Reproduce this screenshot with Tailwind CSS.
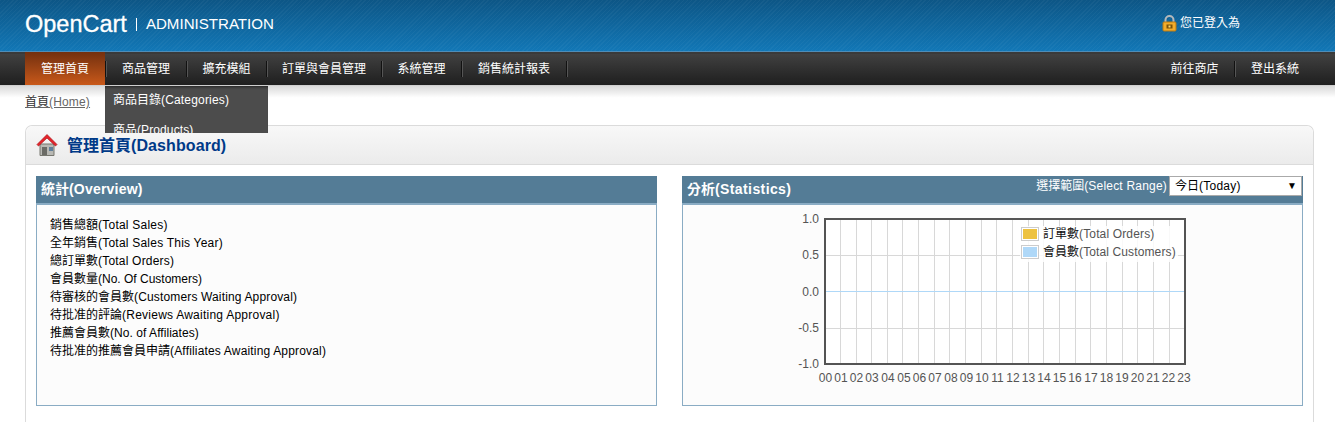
<!DOCTYPE html>
<html lang="zh-Hant">
<head>
    <meta charset="UTF-8">
    <meta name="viewport" content="width=device-width, initial-scale=1.0">
    <script src="https://cdn.jsdelivr.net/npm/@tailwindcss/browser@4"></script>
    <title>管理首頁(Dashboard)</title>
</head>
<body class="relative h-[422px] overflow-hidden bg-white text-[12px] leading-[18px] text-black font-['Liberation_Sans','Noto_Sans_CJK_TC',sans-serif]">

    <!-- header -->
    <header class="h-[52px] flex items-center justify-between pl-[25px] border-b border-[#4f8db8] bg-[image:repeating-linear-gradient(135deg,rgba(255,255,255,0.035)_0,rgba(255,255,255,0.035)_1px,transparent_1px,transparent_3px),linear-gradient(to_bottom,#0d5686,#1277b6)]">
        <div class="flex items-center text-white mb-[3px]">
            <span class="text-[23.5px] leading-[28px] font-['Liberation_Sans'] [-webkit-text-stroke:0.3px_white]">OpenCart</span>
            <span class="ml-[9px] mr-[9px] w-px h-[13px] bg-white"></span>
            <span class="text-[15.1px] leading-[28px]">ADMINISTRATION</span>
        </div>
        <div class="flex items-center text-white w-[173px] mb-[5px]">
            <svg width="15" height="17" viewBox="0 0 15 17" class="mr-[3px]">
                <path d="M3.500 8V5a4 4 0 0 1 8 0v3" fill="none" stroke="#b4b8bb" stroke-width="2"/>
                <rect x="1" y="7" width="13" height="9" rx="1" fill="#f2ac2b" stroke="#b97a12"/>
                <rect x="4.500" y="9.500" width="6" height="4" fill="#7a5208"/>
                <rect x="6.500" y="10.500" width="2" height="2" fill="#ffd86a"/>
            </svg>
            <span>您已登入為</span>
        </div>
    </header>

    <!-- nav -->
    <nav class="h-[34px] flex justify-between pl-[25px] pr-[20px] text-white border-t-2 border-b border-t-[#3a3a3a] border-b-[#cfcfcf] bg-gradient-to-b from-[#414141] to-[#1f1f1f]">
        <ul class="flex items-center h-[30px]">
            <li class="w-[80px] h-[33px] -mt-[2px] self-start flex items-center justify-center bg-gradient-to-b from-[#73300f] to-[#c9591a]">管理首頁</li>
            <li class="w-px h-4 bg-[#111] shadow-[1px_0_0_#555]"></li>
            <li class="w-[80px] text-center">商品管理</li>
            <li class="w-px h-4 bg-[#111] shadow-[1px_0_0_#555]"></li>
            <li class="w-[79px] text-center">擴充模組</li>
            <li class="w-px h-4 bg-[#111] shadow-[1px_0_0_#555]"></li>
            <li class="w-[114px] text-center">訂單與會員管理</li>
            <li class="w-px h-4 bg-[#111] shadow-[1px_0_0_#555]"></li>
            <li class="w-[79px] text-center">系統管理</li>
            <li class="w-px h-4 bg-[#111] shadow-[1px_0_0_#555]"></li>
            <li class="w-[104px] text-center">銷售統計報表</li>
            <li class="w-px h-4 bg-[#111] shadow-[1px_0_0_#555]"></li>
        </ul>
        <ul class="flex items-center h-[30px]">
            <li class="w-[80px] pl-px text-center">前往商店</li>
            <li class="w-px h-4 bg-[#111] shadow-[1px_0_0_#555]"></li>
            <li class="w-[80px] text-center">登出系統</li>
        </ul>
    </nav>

    <!-- open menu -->
    <div class="absolute z-10 left-[105px] top-[86px] w-[163px] h-[47px] overflow-hidden bg-[#4c4c4c] text-white shadow-[inset_0_3px_3px_-2px_#222]">
        <div class="h-[30px] pl-2 pt-[5px]">商品目錄<span class="tracking-[0.17px]">(Categories)</span></div>
        <div class="h-[30px] pl-2 pt-[5px]">商品<span class="tracking-[0.1px]">(Products)</span></div>
    </div>

    <div class="h-[39px] px-[25px] pt-[7px] bg-gradient-to-b from-[#d9d9d9] via-white via-30% to-white">
        <a href="#" class="underline text-[#666]"><span class="text-[#333]">首頁</span><span class="tracking-[0.17px]">(Home)</span></a>
    </div>

    <!-- dashboard box -->
    <main class="mx-[21px] ml-[25px] h-[297px] border border-b-0 border-[#dbdbdb] rounded-t-[7px]">
        <div class="h-[39px] flex items-center pl-[10px] rounded-t-[7px] border-b border-[#dbdbdb] bg-gradient-to-b from-[#f8f8f8] to-[#ebebeb]">
            <svg width="22" height="24" viewBox="0 0 22 24">
                <path d="M4 11h14v11.500H4z" fill="#b9b9b4" stroke="#77776f"/>
                <rect x="6" y="14" width="5" height="8" fill="#6b6b66"/>
                <rect x="13" y="14" width="4" height="4" fill="#5f7f9a"/>
                <path d="M11 1.500 21 11.500l-1.500 1.500L11 5 2.500 13 1 11.500z" fill="#e5242b" stroke="#a9141a" stroke-width="0.700"/>
            </svg>
            <h1 class="ml-[9px] mt-[2px] text-[16px] font-bold text-[#003a88]">管理首頁<span class="tracking-[0.09px]">(Dashboard)</span></h1>
        </div>

        <div class="flex gap-[25px] pl-[10px] pr-[10px] pt-[11px]">
            <!-- overview -->
            <section class="flex-1">
                <h2 class="h-[27px] pl-[5px] pb-[2px] flex items-center text-[14px] font-bold text-white bg-[#547c96]">統計<span class="tracking-[0.2px]">(Overview)</span></h2>
                <ul class="h-[203px] pl-[13px] pt-[11px] bg-[#fcfcfc] border border-[#8aacc4] border-t-2">
                    <li>銷售總額<span class="tracking-[0.23px]">(Total Sales)</span></li>
                    <li>全年銷售<span class="tracking-[0.22px]">(Total Sales This Year)</span></li>
                    <li>總訂單數<span class="tracking-[0.2px]">(Total Orders)</span></li>
                    <li>會員數量<span>(No. Of Customers)</span></li>
                    <li>待審核的會員數<span class="tracking-[0.15px]">(Customers Waiting Approval)</span></li>
                    <li>待批准的評論<span class="tracking-[0.24px]">(Reviews Awaiting Approval)</span></li>
                    <li>推薦會員數<span class="tracking-[0.05px]">(No. of Affiliates)</span></li>
                    <li>待批准的推薦會員申請<span class="tracking-[0.17px]">(Affiliates Awaiting Approval)</span></li>
                </ul>
            </section>

            <!-- statistics -->
            <section class="flex-1">
                <div class="h-[27px] pl-[5px] pr-px flex items-start justify-between bg-[#547c96] text-white">
                    <h2 class="mt-[2px] text-[14px] leading-[22px] font-bold">分析<span class="tracking-[0.4px]">(Statistics)</span></h2>
                    <div class="flex items-center">
                        <span class="mr-[2px]">選擇範圍<span class="tracking-[0.2px]">(Select Range)</span></span>
                        <div class="w-[133px] h-[20px] flex items-center justify-between pl-[5px] pr-[4px] bg-white border border-[#aaa] text-black">
                            <span>今日<span class="tracking-[0.25px]">(Today)</span></span>
                            <span class="text-[10px]">▼</span>
                        </div>
                    </div>
                </div>
                <div class="h-[203px] bg-[#fcfcfc] border border-[#8aacc4] border-t-2">
                    <svg width="619" height="200" viewBox="683 205 619 200" class="block" font-size="12" fill="#545454" font-family="'Liberation Sans','Noto Sans CJK TC',sans-serif">
                        <rect x="825" y="219" width="360" height="145" fill="#fff"/>
                        <g stroke="#d8d8d8">
                            <path d="M840.500 219V364M856.500 219V364M871.500 219V364M887.500 219V364M902.500 219V364M918.500 219V364M934.500 219V364M949.500 219V364M965.500 219V364M981.500 219V364M996.500 219V364M1012.500 219V364M1028.500 219V364M1043.500 219V364M1059.500 219V364M1075.500 219V364M1090.500 219V364M1106.500 219V364M1122.500 219V364M1137.500 219V364M1153.500 219V364M1169.500 219V364"/>
                            <path d="M825 255.500H1185M825 328.500H1185"/>
                        </g>
                        <path d="M825 291.500H1185" stroke="#afd8f8"/>
                        <rect x="825" y="219" width="360" height="145" fill="none" stroke="#545454" stroke-width="2"/>

                        <g text-anchor="end">
                            <text x="819" y="223">1.0</text>
                            <text x="819" y="259">0.5</text>
                            <text x="819" y="296">0.0</text>
                            <text x="819" y="332">-0.5</text>
                            <text x="819" y="368">-1.0</text>
                        </g>
                        <g text-anchor="middle">
                            <text x="825.500" y="382">00</text><text x="841" y="382">01</text><text x="856.500" y="382">02</text><text x="872" y="382">03</text><text x="888" y="382">04</text><text x="904" y="382">05</text><text x="919.500" y="382">06</text><text x="935" y="382">07</text><text x="951" y="382">08</text><text x="966.500" y="382">09</text><text x="982" y="382">10</text><text x="997.500" y="382">11</text><text x="1013" y="382">12</text><text x="1028.500" y="382">13</text><text x="1044" y="382">14</text><text x="1059.500" y="382">15</text><text x="1075" y="382">16</text><text x="1091" y="382">17</text><text x="1106.500" y="382">18</text><text x="1122" y="382">19</text><text x="1137.500" y="382">20</text><text x="1153" y="382">21</text><text x="1168.500" y="382">22</text><text x="1184" y="382">23</text>
                        </g>

                        <!-- legend -->
                        <rect x="1020" y="226" width="158" height="36" fill="#fff" fill-opacity="0.85"/>
                        <rect x="1021.500" y="227.500" width="17" height="13" fill="#fff" stroke="#ccc"/>
                        <rect x="1023" y="229" width="14" height="10" fill="#edc240"/>
                        <rect x="1021.500" y="245.500" width="17" height="13" fill="#fff" stroke="#ccc"/>
                        <rect x="1023" y="247" width="14" height="10" fill="#afd8f8"/>
                        <text x="1043" y="238"><tspan fill="#111">訂單數</tspan><tspan letter-spacing="0.15">(Total Orders)</tspan></text>
                        <text x="1043" y="256"><tspan fill="#111">會員數</tspan><tspan letter-spacing="0.12">(Total Customers)</tspan></text>
                    </svg>
                </div>
            </section>
        </div>
    </main>
</body>
</html>
